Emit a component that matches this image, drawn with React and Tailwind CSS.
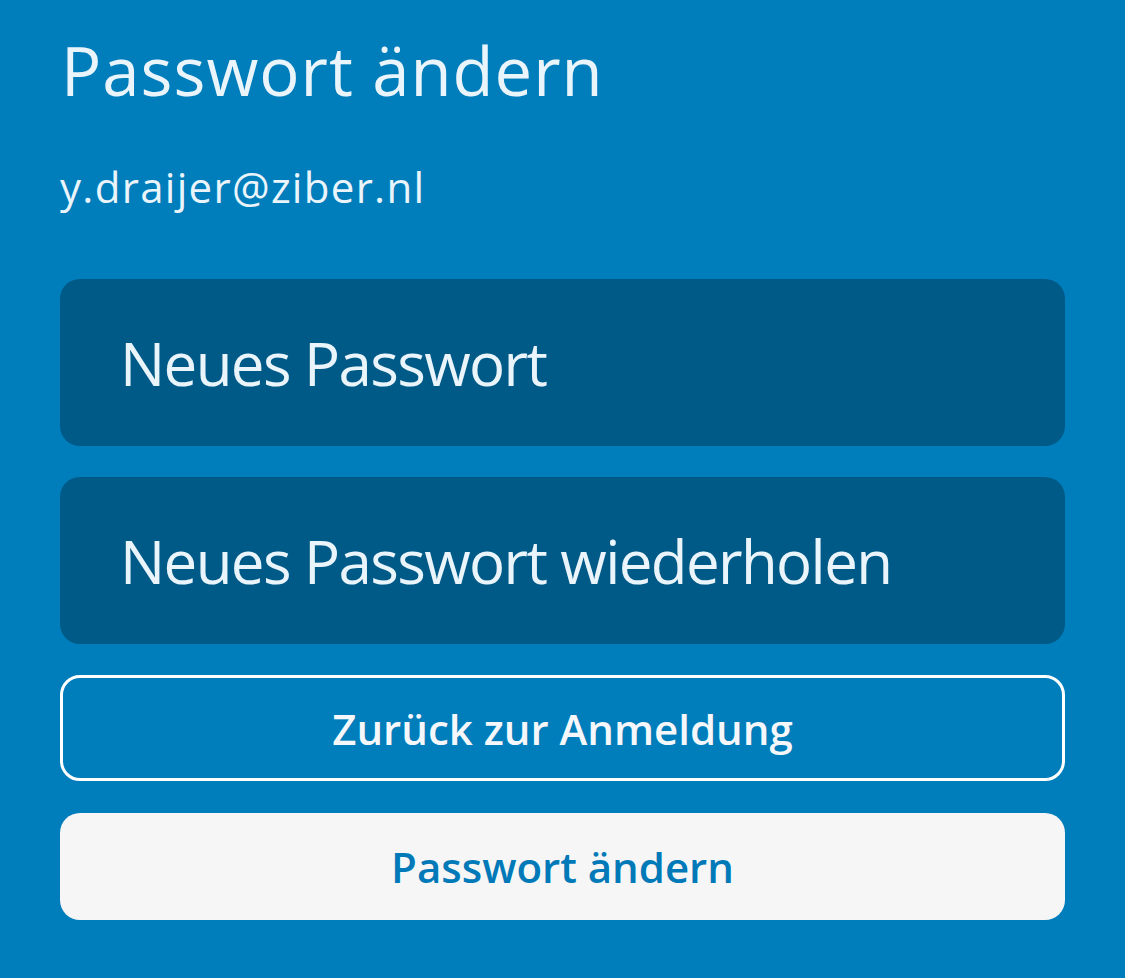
export default function App() {
  return (
    <div className="min-h-[978px] w-full bg-[#007dbb] px-[60px] pt-[30px]" style={{ fontFamily: '"Open Sans", "Noto Sans", sans-serif' }}>
      <h1 className="ml-[1px] text-[67px] leading-[80px] font-normal tracking-[1px] text-[#eaf4fb]">Passwort ändern</h1>
      <p className="mt-[52px] text-[42px] leading-[50px] tracking-[1.3px] text-[#eaf4fb]">y.draijer@ziber.nl</p>
      <div className="mt-[67px] flex flex-col gap-[31px]">
        <input
          type="password"
          placeholder="Neues Passwort"
          className="h-[167px] w-full rounded-[20px] bg-[#005a87] px-[60px] text-[60px] tracking-[-1.6px] text-[#eaf4fb] placeholder:text-[#eaf4fb] outline-none"
        />
        <input
          type="password"
          placeholder="Neues Passwort wiederholen"
          className="h-[167px] w-full rounded-[20px] bg-[#005a87] px-[60px] text-[60px] tracking-[-1.6px] text-[#eaf4fb] placeholder:text-[#eaf4fb] outline-none"
        />
      </div>
      <button className="mt-[31px] flex h-[106px] w-full items-center justify-center rounded-[20px] border-[3px] border-white text-[42px] font-semibold text-[#f5f7fa]">
        Zurück zur Anmeldung
      </button>
      <button className="mt-[32px] flex h-[107px] w-full items-center justify-center rounded-[20px] bg-[#f6f6f6] text-[42px] font-semibold text-[#0079b8]">
        Passwort ändern
      </button>
    </div>
  );
}
